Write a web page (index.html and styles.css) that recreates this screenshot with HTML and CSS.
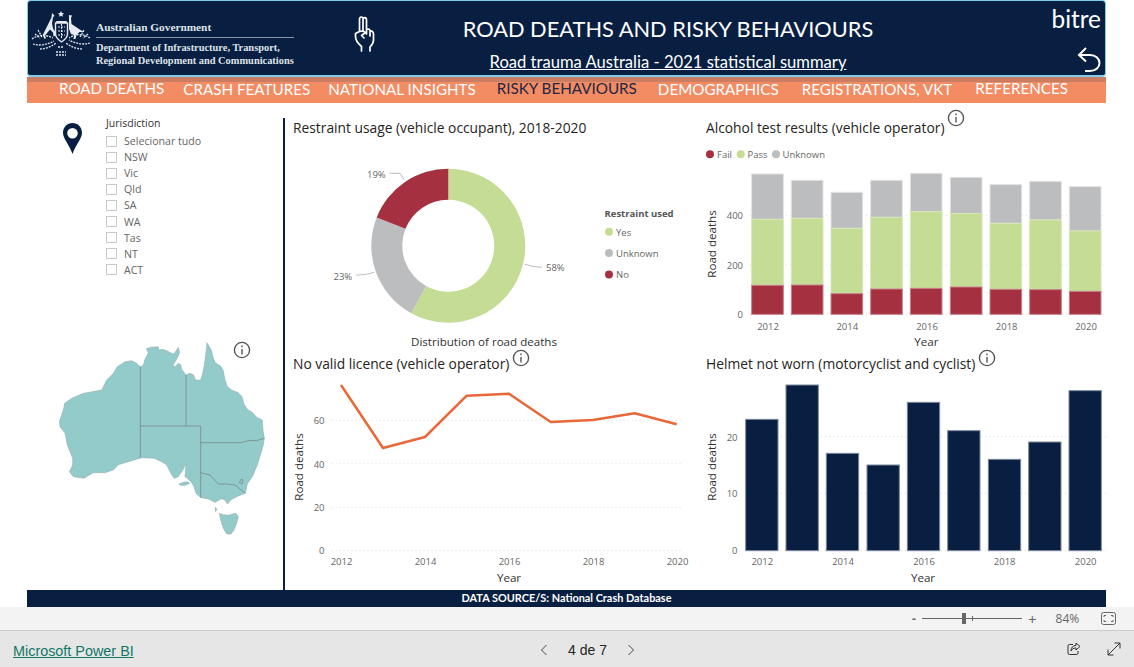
FILE: index.html
```html
<!DOCTYPE html>
<html lang="en">
<head>
<meta charset="utf-8">
<title>Road deaths and risky behaviours</title>
<link rel="stylesheet" href="styles.css">
</head>
<body>
<div class="report">
  <header class="banner">
    <div class="gov">
      <svg class="crest" viewBox="0 0 66 50" width="66" height="50">
        <g fill="#e8ecf2">
          <path d="M33 3l1 2 2 .3-1.500 1.500.4 2-1.900-1-1.900 1 .4-2L30 5.300l2-.3z"/>
          <path d="M24 5l2.500 2.500-1.500 2-1 6 1 5 2 3 .5 4-2 1-.5-4-3-3-5 6 1 3-2 0-1-4 3-6 3-6 2.500-5 .5-4z"/>
          <path d="M41 7l3 .5-1 2.500.5 6 3 2 6 4 4 2-5 0-3 3-1 4-2 0 .5-4-3-1-2-5 0-6z"/>
          <rect x="28" y="13" width="11" height="2" rx="1"/>
        </g>
        <path d="M27.500 15h12v11c0 4-3 6-6 8-3-2-6-4-6-8z" fill="none" stroke="#e8ecf2" stroke-width="1.400"/>
        <path d="M30 19h7M30 23h7M30 27h7M33.500 16v15" stroke="#e8ecf2" stroke-width="1.100" stroke-dasharray="2 1"/>
        <g fill="none" stroke="#dfe5ec" stroke-width="1.300" stroke-dasharray="2 1">
          <path d="M4 31c5-4 13-5 21-1"/>
          <path d="M62 30c-6-4-14-5-21 0"/>
          <path d="M5 36c6 2 14 1 21-3"/>
          <path d="M62 35c-6 2-14 1-21-3"/>
          <path d="M10 22l4 7M7 26l5 4M56 22l-4 7M60 26l-5 4"/>
          <path d="M12 41c5 0 11-2 16-6M54 41c-5 0-11-2-16-6"/>
          <path d="M28 44h10M28 47h10M30 39h6"/>
        </g>
      </svg>
      <div class="gov-text">
        <div class="gov-name">Australian Government</div>
        <div class="gov-dept">Department of Infrastructure, Transport,</div>
        <div class="gov-dept">Regional Development and Communications</div>
      </div>
    </div>
    <svg class="hand" viewBox="0 0 40 45" width="40" height="45">
      <path d="M16.500 41V36.500C13 33.500 10.500 30.500 10.500 26.500V23.500L14.500 21.500V9.500C14.500 6.500 18 6 18 9V9.500C18 7 21.500 7 21.500 10V19.500C23.500 18.500 25 19.500 25 21C27 20.500 28.500 22 28.500 24V30C28.500 33 27 35 25 37V41M14.500 21.500C16.500 21 19 21 20.500 22.500L16.500 25.500 19 28M18 9.500V20.500M21.500 19.500V24M25 21V26" fill="none" stroke="#fff" stroke-width="1.700" stroke-linecap="round" stroke-linejoin="round"/>
    </svg>
    <div class="heading">
      <h1 class="heading-title">ROAD DEATHS AND RISKY BEHAVIOURS</h1>
      <a class="heading-link" href="#">Road trauma Australia - 2021 statistical summary</a>
    </div>
    <div class="brand">
      <div class="brand-name">bitre</div>
      <svg class="back" viewBox="0 0 24 27" width="24" height="27">
        <path d="M9 2L2 9l7 6.500M2 9h11c6 0 9.500 4 9.500 8s-3.500 8-9.500 8H8" fill="none" stroke="#fff" stroke-width="2"/>
      </svg>
    </div>
  </header>

  <nav class="tabs">
    <a class="tab tab-road" href="#">ROAD DEATHS</a>
    <a class="tab tab-crash" href="#">CRASH FEATURES</a>
    <a class="tab tab-nat" href="#">NATIONAL INSIGHTS</a>
    <a class="tab tab-risky" href="#">RISKY BEHAVIOURS</a>
    <a class="tab tab-demo" href="#">DEMOGRAPHICS</a>
    <a class="tab tab-reg" href="#">REGISTRATIONS, VKT</a>
    <a class="tab tab-ref" href="#">REFERENCES</a>
  </nav>

  <main class="dash">
    <aside class="side">
      <div class="filter">
        <svg class="pin" viewBox="0 0 19 31" width="19" height="31">
          <path fill-rule="evenodd" d="M9.500 0C4.200 0 0 4.200 0 9.700 0 15.500 6 21 9.500 31 13 21 19 15.500 19 9.700 19 4.200 14.800 0 9.500 0zm0 5a5.300 5.300 0 1 1 0 10.600A5.300 5.300 0 0 1 9.500 5z" fill="#081f41"/>
        </svg>
        <div class="slicer">
          <div class="slicer-title">Jurisdiction</div>
          <ul class="slicer-list">
            <li class="slicer-item"><span class="box"></span>Selecionar tudo</li>
            <li class="slicer-item"><span class="box"></span>NSW</li>
            <li class="slicer-item"><span class="box"></span>Vic</li>
            <li class="slicer-item"><span class="box"></span>Qld</li>
            <li class="slicer-item"><span class="box"></span>SA</li>
            <li class="slicer-item"><span class="box"></span>WA</li>
            <li class="slicer-item"><span class="box"></span>Tas</li>
            <li class="slicer-item"><span class="box"></span>NT</li>
            <li class="slicer-item"><span class="box"></span>ACT</li>
          </ul>
        </div>
      </div>
      <div class="map-wrap">
        <svg class="info info-map" viewBox="0 0 18 18" width="18" height="18"><circle cx="9" cy="9" r="7.600"/><path d="M9 8v5.500M9 4.600v1.600"/></svg>
        <svg class="map" viewBox="0 0 780 660" width="260" height="220">
          <polygon class="land" points="331,110 340,106 344,90 350,78 355,68 349,56 362,52 385,50 386,60 398,58 410,62 422,68 432,72 445,52 449,68 442,84 430,104 434,112 445,100 452,104 455,118 468,135 480,130 490,134 497,150 512,150 518,130 523,105 527,75 531,38 537,48 545,62 549,82 556,98 572,108 580,122 585,150 592,170 605,180 625,188 636,200 642,222 652,238 668,248 680,262 697,270 699,300 703,325 700,345 692,372 682,405 668,438 652,462 646,490 625,498 605,508 592,522 585,510 575,506 555,517 535,507 512,503 498,490 492,470 485,458 472,445 465,440 468,400 460,418 445,440 432,445 420,425 410,405 395,395 372,385 335,383 300,394 265,404 250,420 225,428 190,428 162,445 130,440 118,425 128,405 128,385 112,345 105,310 90,290 88,275 100,240 104,220 125,205 160,190 215,180 230,150 250,130 262,110 285,95 305,92 320,100"/>
          <polygon class="land" points="568,550 580,554 595,556 608,552 618,550 625,560 620,580 612,600 603,612 590,612 580,595 572,570"/>
          <polygon class="land" points="447,462 462,456 476,456 478,461 465,466 450,466"/>
          <polygon class="land" points="556,532 561,538 556,545"/>
          <path class="border" d="M331 110V383M331 288H512M468 135V288M512 288V503M512 338H632L660 331 680 332 703 325M512 428L540 435 565 462 590 462 615 465 646 490M628 458l5-10 6 2-3 12z"/>
        </svg>
      </div>
    </aside>

    <section class="panel panel-top">
      <div class="title-row"><h2 class="chart-title">Restraint usage (vehicle occupant), 2018-2020</h2></div>
      <svg class="chart" viewBox="285 138 410 212" width="410" height="212">
        <path class="c-green" d="M448.300 168.700A77 77 0 1 1 411.200 313.200L426.100 286A46 46 0 1 0 448.300 199.700z"/>
        <path class="c-gray" d="M411.200 313.200A77 77 0 0 1 376.700 217.400L405.500 228.800A46 46 0 0 0 426.100 286z"/>
        <path class="c-red" d="M376.700 217.400A77 77 0 0 1 448.300 168.700V199.700A46 46 0 0 0 405.500 228.800z"/>
        <path class="leader" d="M525 264.300Q533 267.300 541.700 267.300M356 275.200Q366 275.200 374.300 272.300M390 173.300H400L404.300 180"/>
        <text class="lbl" x="546" y="271">58%</text>
        <text class="lbl" x="333.500" y="280">23%</text>
        <text class="lbl" x="367" y="178">19%</text>
        <text class="lgd-title" x="604.500" y="217">Restraint used</text>
        <circle class="c-green" cx="609" cy="231.700" r="4"/><text class="lbl" x="616" y="235.500">Yes</text>
        <circle class="c-gray" cx="609" cy="253" r="4"/><text class="lbl" x="616" y="256.500">Unknown</text>
        <circle class="c-red" cx="609" cy="274.500" r="4"/><text class="lbl" x="616" y="278">No</text>
        <text class="axis-title mid" x="484" y="345.500">Distribution of road deaths</text>
      </svg>
    </section>

    <section class="panel panel-top">
      <div class="title-row"><h2 class="chart-title">Alcohol test results (vehicle operator)</h2><svg class="info info-top" viewBox="0 0 18 18" width="18" height="18"><circle cx="9" cy="9" r="7.600"/><path d="M9 8v5.500M9 4.600v1.600"/></svg></div>
      <svg class="chart" viewBox="695 138 411 212" width="411" height="212">
        <text class="lbl" x="717" y="158">Fail</text><circle class="c-red" cx="710" cy="154.300" r="4"/>
        <circle class="c-green" cx="740.700" cy="154.300" r="4"/><text class="lbl" x="747.500" y="158">Pass</text>
        <circle class="c-gray" cx="776" cy="154.300" r="4"/><text class="lbl" x="782.500" y="158">Unknown</text>
        <path class="grid" d="M750 215.300H1106M750 265H1106M750 314.300H1106"/>
        <g transform="translate(695 100) scale(.33333)">
          <g class="bar-gray">
            <rect x="170" y="222" width="95" height="136"/><rect x="289" y="241" width="95" height="114"/><rect x="408" y="277" width="95" height="108"/><rect x="527" y="241" width="95" height="111"/><rect x="646" y="220" width="95" height="115"/><rect x="766" y="232" width="95" height="109"/><rect x="885" y="254" width="95" height="116"/><rect x="1004" y="244" width="95" height="116"/><rect x="1123" y="260" width="95" height="133"/>
          </g>
          <g class="bar-green">
            <rect x="170" y="358" width="95" height="198"/><rect x="289" y="355" width="95" height="200"/><rect x="408" y="385" width="95" height="196"/><rect x="527" y="352" width="95" height="215"/><rect x="646" y="335" width="95" height="230"/><rect x="766" y="341" width="95" height="220"/><rect x="885" y="370" width="95" height="198"/><rect x="1004" y="360" width="95" height="209"/><rect x="1123" y="393" width="95" height="181"/>
          </g>
          <g class="bar-red">
            <rect x="170" y="556" width="95" height="87"/><rect x="289" y="555" width="95" height="88"/><rect x="408" y="581" width="95" height="62"/><rect x="527" y="567" width="95" height="76"/><rect x="646" y="565" width="95" height="78"/><rect x="766" y="561" width="95" height="82"/><rect x="885" y="568" width="95" height="75"/><rect x="1004" y="569" width="95" height="74"/><rect x="1123" y="574" width="95" height="69"/>
          </g>
        </g>
        <text class="lbl end" x="743" y="219">400</text><text class="lbl end" x="743" y="268.500">200</text><text class="lbl end" x="743" y="318">0</text>
        <text class="lbl mid" x="768" y="329.500">2012</text><text class="lbl mid" x="847.300" y="329.500">2014</text><text class="lbl mid" x="927" y="329.500">2016</text><text class="lbl mid" x="1006.700" y="329.500">2018</text><text class="lbl mid" x="1086" y="329.500">2020</text>
        <text class="axis-title mid" x="926.300" y="346">Year</text>
        <text class="axis-title mid" transform="translate(716 244) rotate(-90)">Road deaths</text>
      </svg>
    </section>

    <section class="panel panel-bottom">
      <div class="title-row"><h2 class="chart-title">No valid licence (vehicle operator)</h2><svg class="info info-bottom" viewBox="0 0 18 18" width="18" height="18"><circle cx="9" cy="9" r="7.600"/><path d="M9 8v5.500M9 4.600v1.600"/></svg></div>
      <svg class="chart" viewBox="285 375 410 215" width="410" height="215">
        <path class="grid" d="M331.700 420.300H683M331.700 463.700H683M331.700 507.300H683M331.700 550.700H683"/>
        <polyline class="line" points="341,385 383,448 425,437 466.700,395.700 509,393.700 550.700,422 592.700,420 634.700,413.300 676.700,424.300"/>
        <text class="lbl end" x="324.500" y="424">60</text><text class="lbl end" x="324.500" y="467.500">40</text><text class="lbl end" x="324.500" y="511">20</text><text class="lbl end" x="324.500" y="554">0</text>
        <text class="lbl mid" x="341.500" y="565">2012</text><text class="lbl mid" x="425.500" y="565">2014</text><text class="lbl mid" x="509.500" y="565">2016</text><text class="lbl mid" x="593.500" y="565">2018</text><text class="lbl mid" x="677.500" y="565">2020</text>
        <text class="axis-title mid" x="509" y="581.500">Year</text>
        <text class="axis-title mid" transform="translate(303 467) rotate(-90)">Road deaths</text>
      </svg>
    </section>

    <section class="panel panel-bottom">
      <div class="title-row"><h2 class="chart-title">Helmet not worn (motorcyclist and cyclist)</h2><svg class="info info-bottom" viewBox="0 0 18 18" width="18" height="18"><circle cx="9" cy="9" r="7.600"/><path d="M9 8v5.500M9 4.600v1.600"/></svg></div>
      <svg class="chart" viewBox="695 375 411 215" width="411" height="215">
        <path class="grid" d="M745 436.700H1106M745 493.300H1106M745 550.700H1106"/>
        <g class="bar-navy" transform="translate(695 345) scale(.33333)">
          <rect x="152" y="223" width="97" height="394"/><rect x="273" y="120" width="97" height="497"/><rect x="394" y="325" width="97" height="292"/><rect x="516" y="360" width="97" height="257"/><rect x="637" y="172" width="97" height="445"/><rect x="758" y="257" width="97" height="360"/><rect x="880" y="343" width="97" height="274"/><rect x="1001" y="291" width="97" height="326"/><rect x="1122" y="137" width="97" height="480"/>
        </g>
        <text class="lbl end" x="737.500" y="440.500">20</text><text class="lbl end" x="737.500" y="497">10</text><text class="lbl end" x="737.500" y="554">0</text>
        <text class="lbl mid" x="762.300" y="565">2012</text><text class="lbl mid" x="843" y="565">2014</text><text class="lbl mid" x="924" y="565">2016</text><text class="lbl mid" x="1004.700" y="565">2018</text><text class="lbl mid" x="1085.700" y="565">2020</text>
        <text class="axis-title mid" x="923" y="582">Year</text>
        <text class="axis-title mid" transform="translate(716 467) rotate(-90)">Road deaths</text>
      </svg>
    </section>
  </main>

  <div class="source">DATA SOURCE/S: National Crash Database</div>
</div>

<div class="zoombar">
  <span class="zoom-minus">-</span>
  <div class="zoom-track"><span class="zoom-tick"></span><span class="zoom-thumb"></span></div>
  <span class="zoom-plus">+</span>
  <span class="zoom-pct">84%</span>
  <svg class="zoom-fit" viewBox="0 0 15 13" width="15" height="13">
    <rect x=".5" y=".5" width="14" height="12" rx="2" fill="none" stroke="#666"/>
    <path d="M3 5V3.500h2M10 3.500h2V5M3 8v1.500h2M10 9.500h2V8" fill="none" stroke="#666"/>
  </svg>
</div>

<footer class="pbi">
  <a class="pbi-link" href="#">Microsoft Power BI</a>
  <div class="pager">
    <svg viewBox="0 0 8 12" width="8" height="12"><path d="M6.500 1L1.500 6l5 5" fill="none" stroke="#444"/></svg>
    <span class="pager-text">4 de 7</span>
    <svg viewBox="0 0 8 12" width="8" height="12"><path d="M1.500 1l5 5-5 5" fill="none" stroke="#444"/></svg>
  </div>
  <div class="pbi-actions">
    <svg viewBox="0 0 14 14" width="14" height="14"><path d="M6 2.500H2.500a1.500 1.500 0 0 0-1.500 1.500v7a1.500 1.500 0 0 0 1.500 1.500h7A1.500 1.500 0 0 0 11 11V9" fill="none" stroke="#333"/><path d="M9 1l4 3.500L9 8V6C6.500 6 5 7 4 9c0-3.500 2-5.500 5-5.500z" fill="none" stroke="#333"/></svg>
    <svg viewBox="0 0 14 14" width="14" height="14"><path d="M1 13L13 1M7.500 1H13v5.500M1 7.500V13h5.500" fill="none" stroke="#333"/></svg>
  </div>
</footer>
</body>
</html>
```

FILE: styles.css
```css
* { box-sizing: border-box; }
html, body { margin: 0; padding: 0; background: #fff; }
body { width: 1134px; height: 667px; overflow: hidden; font-family: "Open Sans", "Noto Sans", sans-serif; }

.report { margin-left: 27px; width: 1079px; height: 607px; display: flex; flex-direction: column; }

.banner {
  height: 77px; flex: none; display: flex; align-items: flex-start;
  background: #081f41; color: #fff;
  border: 1px solid #7fcdeb; border-width: 1px 1px 2px; border-radius: 4px;
}
.gov { display: flex; padding: 7px 0 0 0; width: 317px; flex: none; }
.crest { flex: none; margin-top: 0; }
.gov-text { margin: 13px 0 0 2px; width: 198px; font-family: "Liberation Serif", serif; font-weight: 700; color: #dfe3ea; }
.gov-name { font-size: 11.3px; line-height: 13px; padding-bottom: 3px; border-bottom: 1px solid #8a95a8; margin-bottom: 3px; white-space: nowrap; }
.gov-dept { font-size: 10.400px; line-height: 13px; white-space: nowrap; }
.hand { flex: none; margin-top: 9px; }
.heading { width: 436px; margin-left: 65px; flex: none; text-align: center; font-family: Lato, sans-serif; }
.heading-title { margin: 13px 0 0; font-size: 21.8px; line-height: 30px; font-weight: 400; white-space: nowrap; }
.heading-link { display: block; margin-top: 8px; font-size: 16.6px; line-height: 20px; color: #fff; text-decoration: underline; white-space: nowrap; }
.brand { margin-left: auto; padding-right: 4px; display: flex; flex-direction: column; align-items: flex-end; font-family: Lato, sans-serif; }
.brand-name { font-size: 24.4px; line-height: 26px; margin-top: 5px; }
.back { margin-top: 14px; }

.tabs {
  height: 26px; flex: none; display: flex; padding-left: 32px;
  background: #f38b63; border-top: 5px solid #c97d62;
  font-family: Lato, sans-serif; font-size: 15.2px; line-height: 20px;
}
.tab { color: #fff; text-decoration: none; white-space: nowrap; margin-top: -4px; }
.tab-crash { margin-left: 19px; margin-top: -3px; }
.tab-nat { margin-left: 18px; margin-top: -3px; }
.tab-risky { margin-left: 21px; color: #1c2744; margin-top: -4px; }
.tab-demo { margin-left: 21px; margin-top: -3px; }
.tab-reg { margin-left: 23px; margin-top: -3px; }
.tab-ref { margin-left: 23px; margin-top: -4px; }

.dash { flex: 1; min-height: 0; display: grid; grid-template-columns: 258px 410px 411px; grid-template-rows: 247px 240px; }
.side { grid-row: 1 / 3; margin-top: 15px; border-right: 2px solid #081f41; display: flex; flex-direction: column; justify-content: space-between; }
.filter { display: flex; padding-left: 36px; }
.pin { flex: none; margin-top: 5px; }
.slicer { margin: -2px 0 0 24px; }
.slicer-title { font-size: 10.5px; line-height: 14px; color: #333; }
.slicer-list { list-style: none; margin: 3px 0 0; padding: 0; }
.slicer-item { display: flex; align-items: center; height: 16.100px; font-size: 10.600px; color: #666; }
.box { width: 11px; height: 11px; border: 1px solid #c8c8c8; margin-right: 7px; flex: none; }
.map-wrap { position: relative; flex: none; width: 260px; height: 220px; margin: 0 0 40px 3px; }
.map { display: block; }
.land { fill: #93caca; stroke: #8fa9a9; stroke-width: 1.500; }
.border { fill: none; stroke: #7c8a8b; stroke-width: 2.500; }

.info { fill: none; stroke: #555; stroke-width: 1.400; flex: none; }
.info-map { position: absolute; left: 203px; top: 11px; }
.info-top { margin: -9.500px 0 0 3px; }
.info-bottom { margin: -5px 0 0 3px; }

.panel { min-width: 0; }
.panel-top { padding-top: 15px; }
.panel-bottom { padding-top: 4px; }
.panel-bottom .title-row { height: 21px; }
.title-row { height: 20px; padding-left: 11px; display: flex; align-items: flex-start; }
.panel:nth-of-type(2n+1) .title-row { padding-left: 8px; }
.chart-title { margin: 0; font-size: 13.800px; line-height: 20px; font-weight: 400; color: #252423; white-space: nowrap; }
.chart { display: block; }

.lbl { font-size: 9.500px; fill: #666; }
.lgd-title { font-size: 9.500px; font-weight: 700; fill: #555; }
.axis-title { font-size: 11.600px; fill: #333; }
.end { text-anchor: end; }
.mid { text-anchor: middle; }
.c-green { fill: #c4dc93; }
.c-gray { fill: #bcbdbf; }
.c-red { fill: #a5303f; }
.leader { fill: none; stroke: #bbb; }
.grid { fill: none; stroke: #ddd; stroke-dasharray: 1 3; }
.line { fill: none; stroke: #e8683a; stroke-width: 2.500; stroke-linejoin: round; }
.bar-gray rect { fill: #bcbdbf; stroke: #e2e2e3; stroke-width: 3; }
.bar-green rect { fill: #c4dc93; stroke: #d7e7b6; stroke-width: 3; }
.bar-red rect { fill: #a5303f; stroke: #c7808a; stroke-width: 3; }
.bar-navy rect { fill: #081f41; stroke: #7d899c; stroke-width: 3; }

.source { height: 17px; flex: none; background: #081f41; color: #fff; text-align: center; font-family: Lato, sans-serif; font-size: 10.9px; font-weight: 700; line-height: 16px; }

.zoombar { height: 24px; background: #f3f3f3; border-bottom: 1px solid #ccc; display: flex; align-items: center; position: relative; padding-left: 912px; font-size: 12px; color: #666; }
.zoom-minus { width: 10px; font-weight: 700; }
.zoom-track { position: relative; width: 100px; height: 1px; background: #666; }
.zoom-tick { position: absolute; left: 50px; top: -2px; width: 1px; height: 5px; background: #666; }
.zoom-thumb { position: absolute; left: 40px; top: -5px; width: 4px; height: 11px; background: #666; }
.zoom-plus { margin-left: 6px; font-size: 15px; line-height: 20px; }
.zoom-pct { margin-left: 19px; }
.zoom-fit { margin-left: 22px; }

.pbi { height: 36px; background: #e6e6e6; display: flex; align-items: center; position: relative; padding-left: 13px; }
.pbi-link { font-family: "Liberation Sans", sans-serif; font-size: 14.4px; color: #117865; width: 527px; flex: none; margin-top: 3px; }
.pager { display: flex; align-items: center; gap: 20px; font-family: "Liberation Sans", sans-serif; font-size: 14px; color: #252423; margin-top: 1px; }
.pager-text { white-space: nowrap; }
.pbi-actions { margin-left: auto; margin-right: 13px; display: flex; gap: 26px; }
```
